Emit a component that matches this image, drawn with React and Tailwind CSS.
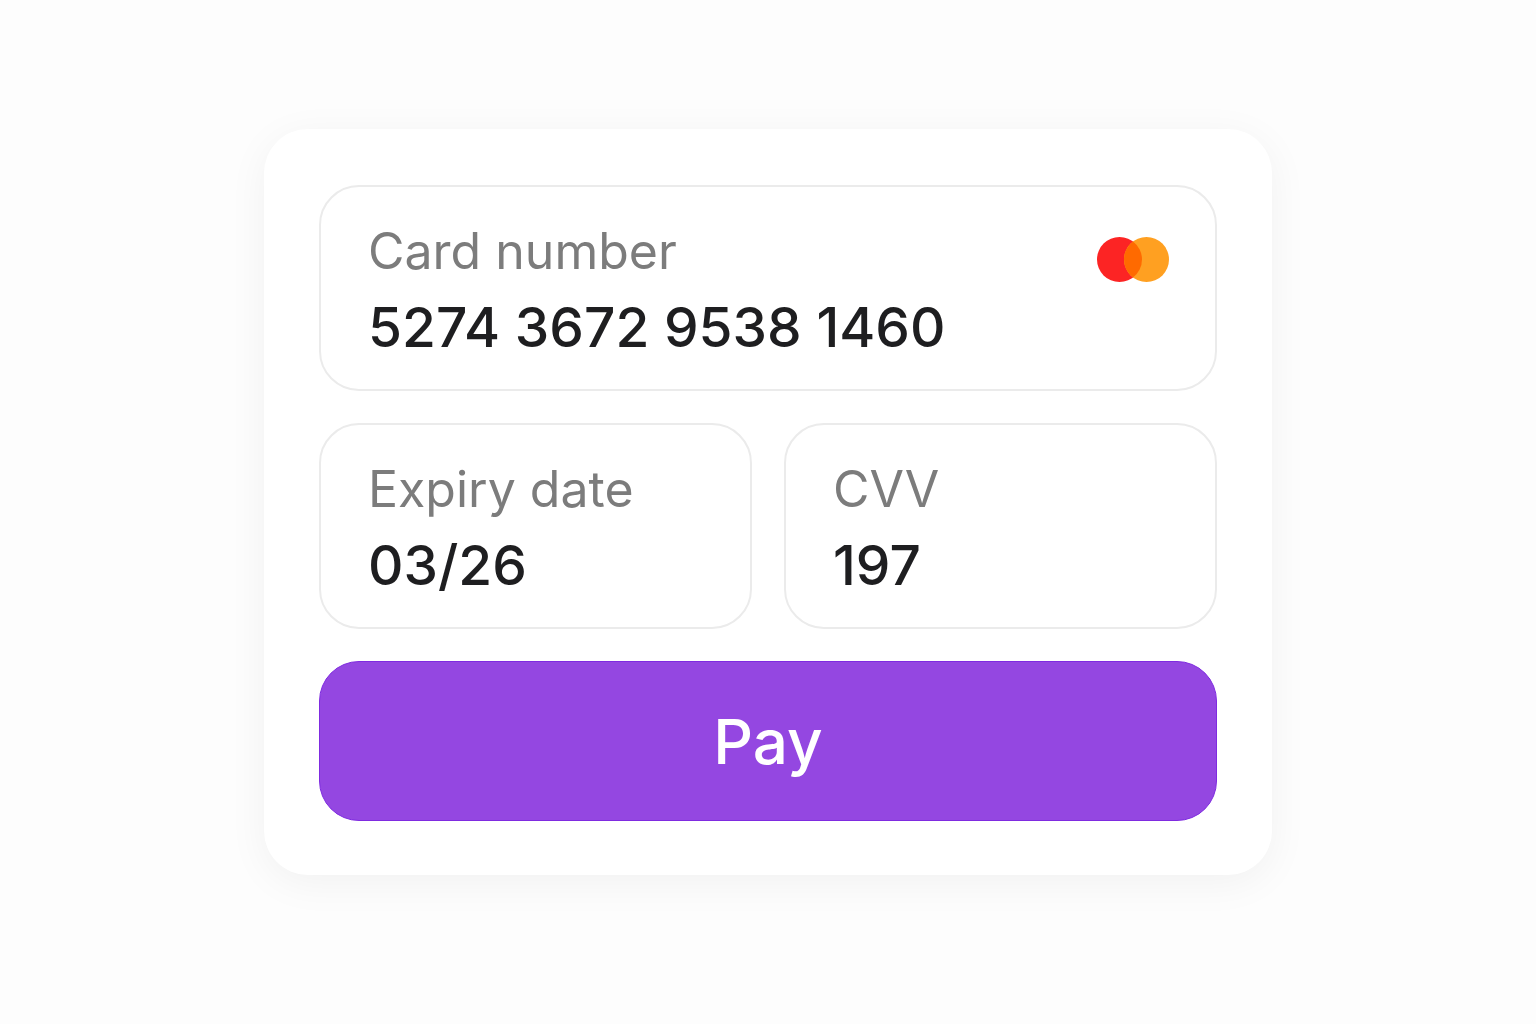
import { useState } from 'react'

function CardBrand() {
  return (
    <svg viewBox="0 0 72 46" className="h-[46px] w-[72px] shrink-0" role="img" aria-label="Mastercard">
      <circle cx="22.5" cy="22.5" r="22.5" fill="#fc2424" />
      <circle cx="49.5" cy="22.5" r="22.5" fill="#ffa021" />
      <path d="M36 4.5a22.5 22.5 0 0 1 0 36a22.5 22.5 0 0 1 0-36z" fill="#ff6a00" />
    </svg>
  )
}

function Field({ id, label, value, onChange, autoComplete, children }) {
  return (
    <div className="flex min-w-0 items-start justify-between rounded-[40px] border-2 border-[#ebebeb] pt-[26px] pr-[46px] pb-6 pl-[47px]">
      <div className="min-w-0 flex-1">
        <label htmlFor={id} className="block text-[50px] leading-[76px] text-[#7c7c7c]">
          {label}
        </label>
        <input
          id={id}
          type="text"
          inputMode="numeric"
          autoComplete={autoComplete}
          value={value}
          onChange={(event) => onChange(event.target.value)}
          className="block h-[76px] w-full bg-transparent text-[55px] font-medium text-[#1e1e20] outline-none"
        />
      </div>
      {children}
    </div>
  )
}

function App() {
  const [cardNumber, setCardNumber] = useState('5274 3672 9538 1460')
  const [expiry, setExpiry] = useState('03/26')
  const [cvv, setCvv] = useState('197')

  return (
    <main className="flex min-h-screen items-start justify-center bg-[#fdfdfd] px-8 pt-[129px] pb-32 font-['Inter',sans-serif]">
      <form
        onSubmit={(event) => event.preventDefault()}
        className="w-full max-w-[1008px] space-y-8 rounded-[44px] bg-white px-[55px] pt-14 pb-[54px] shadow-[0_8px_40px_rgba(0,0,0,0.05)]"
      >
        <Field
          id="card-number"
          label="Card number"
          value={cardNumber}
          onChange={setCardNumber}
          autoComplete="cc-number"
        >
          <div className="pt-6">
            <CardBrand />
          </div>
        </Field>

        <div className="grid grid-cols-2 gap-8">
          <Field id="expiry" label="Expiry date" value={expiry} onChange={setExpiry} autoComplete="cc-exp" />
          <Field id="cvv" label="CVV" value={cvv} onChange={setCvv} autoComplete="cc-csc" />
        </div>

        <button
          type="submit"
          className="block h-40 w-full rounded-[40px] border border-[#7f2be0] bg-[#9447e1] text-[62px] font-medium text-white"
        >
          Pay
        </button>
      </form>
    </main>
  )
}

export default App
